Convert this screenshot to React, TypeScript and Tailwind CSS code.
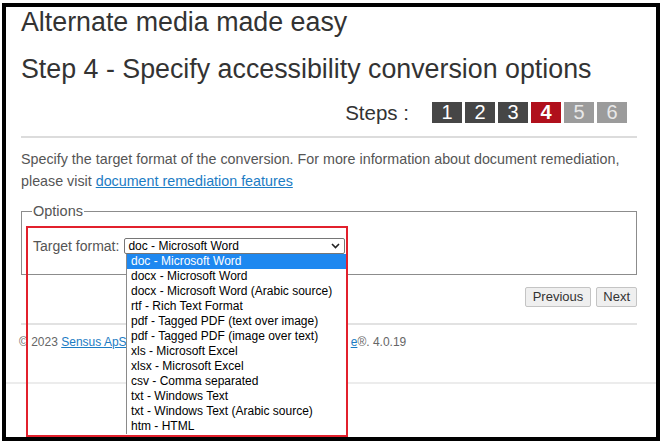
import React from "react";

const items = [
  "doc - Microsoft Word",
  "docx - Microsoft Word",
  "docx - Microsoft Word (Arabic source)",
  "rtf - Rich Text Format",
  "pdf - Tagged PDF (text over image)",
  "pdf - Tagged PDF (image over text)",
  "xls - Microsoft Excel",
  "xlsx - Microsoft Excel",
  "csv - Comma separated",
  "txt - Windows Text",
  "txt - Windows Text (Arabic source)",
  "htm - HTML",
];

export default function App() {
  return (
    <div
      className="relative w-[664px] h-[445px] bg-white overflow-hidden"
      style={{ fontFamily: '"Liberation Sans", Arial, sans-serif' }}
    >
      <div className="ml-[2px] mt-[3px] w-[658px] h-[438px] border-4 border-black pl-[15px] pr-[19px] flex flex-col text-[#333]">
        <h1 className="text-[26.8px] leading-[30px] text-[#333]">Alternate media made easy</h1>
        <h2 className="mt-[17px] text-[26.8px] leading-[30px] text-[#333]">
          Step 4 - Specify accessibility conversion options
        </h2>
        <div className="mt-[18px] flex items-center justify-end pr-[10px] gap-[3px]">
          <span className="text-[20.5px] leading-[21px] mr-[20px] text-[#333]">Steps :</span>
          <span className="w-[30px] h-[21px] bg-[#464646] text-white text-[20px] leading-[21px] text-center">1</span>
          <span className="w-[30px] h-[21px] bg-[#464646] text-white text-[20px] leading-[21px] text-center">2</span>
          <span className="w-[30px] h-[21px] bg-[#464646] text-white text-[20px] leading-[21px] text-center">3</span>
          <span className="w-[30px] h-[21px] bg-[#b0101c] text-white text-[20px] leading-[21px] text-center font-bold">4</span>
          <span className="w-[30px] h-[21px] bg-[#9b9b9b] text-[#e8e8e8] text-[20px] leading-[21px] text-center">5</span>
          <span className="w-[30px] h-[21px] bg-[#9b9b9b] text-[#e8e8e8] text-[20px] leading-[21px] text-center">6</span>
        </div>
        <div className="mt-[13px] h-[2px] bg-[#dcdcdc]" />
        <p className="mt-[10px] text-[14.3px] leading-[22px] text-[#555]">
          Specify the target format of the conversion. For more information about document remediation,
          <br />
          please visit <a className="text-[#1c7cc4] underline">document remediation features</a>
        </p>
        <fieldset className="mt-[11px] h-[72px] border border-[#8c8c8c] pl-[11px] pr-[10px]">
          <legend className="text-[14.5px] leading-[17px] text-[#555] px-[1px] -ml-[1px]">Options</legend>
          <div className="mt-[18px] flex items-center">
            <span className="text-[14px] leading-[16px] text-[#555] mr-[5px]">Target format:</span>
            <div className="w-[221px] h-[16px] border border-[#767676] rounded-[2px] flex items-center justify-between pl-[3px] pr-[4px] text-[12px] leading-[14px] text-black">
              <span>doc - Microsoft Word</span>
              <svg width="9" height="6" viewBox="0 0 9 6">
                <path d="M1 1 L4.5 4.5 L8 1" fill="none" stroke="#222" strokeWidth="1.6" />
              </svg>
            </div>
          </div>
        </fieldset>
        <div className="mt-[12px] flex justify-end gap-[5px]">
          <button className="h-[20px] px-[7px] text-[13px] leading-[18px] text-[#333] bg-[#efefef] border border-[#c4c4c4] rounded-[2px]">
            Previous
          </button>
          <button className="h-[20px] px-[6px] text-[13px] leading-[18px] text-[#333] bg-[#efefef] border border-[#c4c4c4] rounded-[2px]">
            Next
          </button>
        </div>
        <div className="mt-[16px] h-[2px] bg-[#e2e2e2]" />
        <p className="mt-[10px] -ml-[2px] text-[12px] leading-[14px] text-[#666]">
          © 2023 <a className="text-[#1c7cc4] underline">Sensus ApS</a>
          <span className="invisible">. All rights reserved. SensusAccess Servic</span>
          <a className="text-[#1c7cc4] underline">e</a>®. 4.0.19
        </p>
        <div className="mt-[33px] -ml-[15px] -mr-[19px] h-[2px] bg-[#ececec]" />
      </div>

      {/* open dropdown list */}
      <div className="absolute left-[126px] top-[254px] w-[221px] bg-white border-l border-[#8a8a8a] text-[12px] leading-[15px] text-black">
        {items.map((it, i) => (
          <div
            key={i}
            className={i === 0 ? "h-[15px] pl-[4px] bg-[#1e88f0] text-white" : "h-[15px] pl-[4px]"}
          >
            {it}
          </div>
        ))}
      </div>

      {/* red annotation box */}
      <div className="absolute left-[26px] top-[226px] w-[322px] h-[211px] border-[2.5px] border-[#e2202c]" />
    </div>
  );
}
